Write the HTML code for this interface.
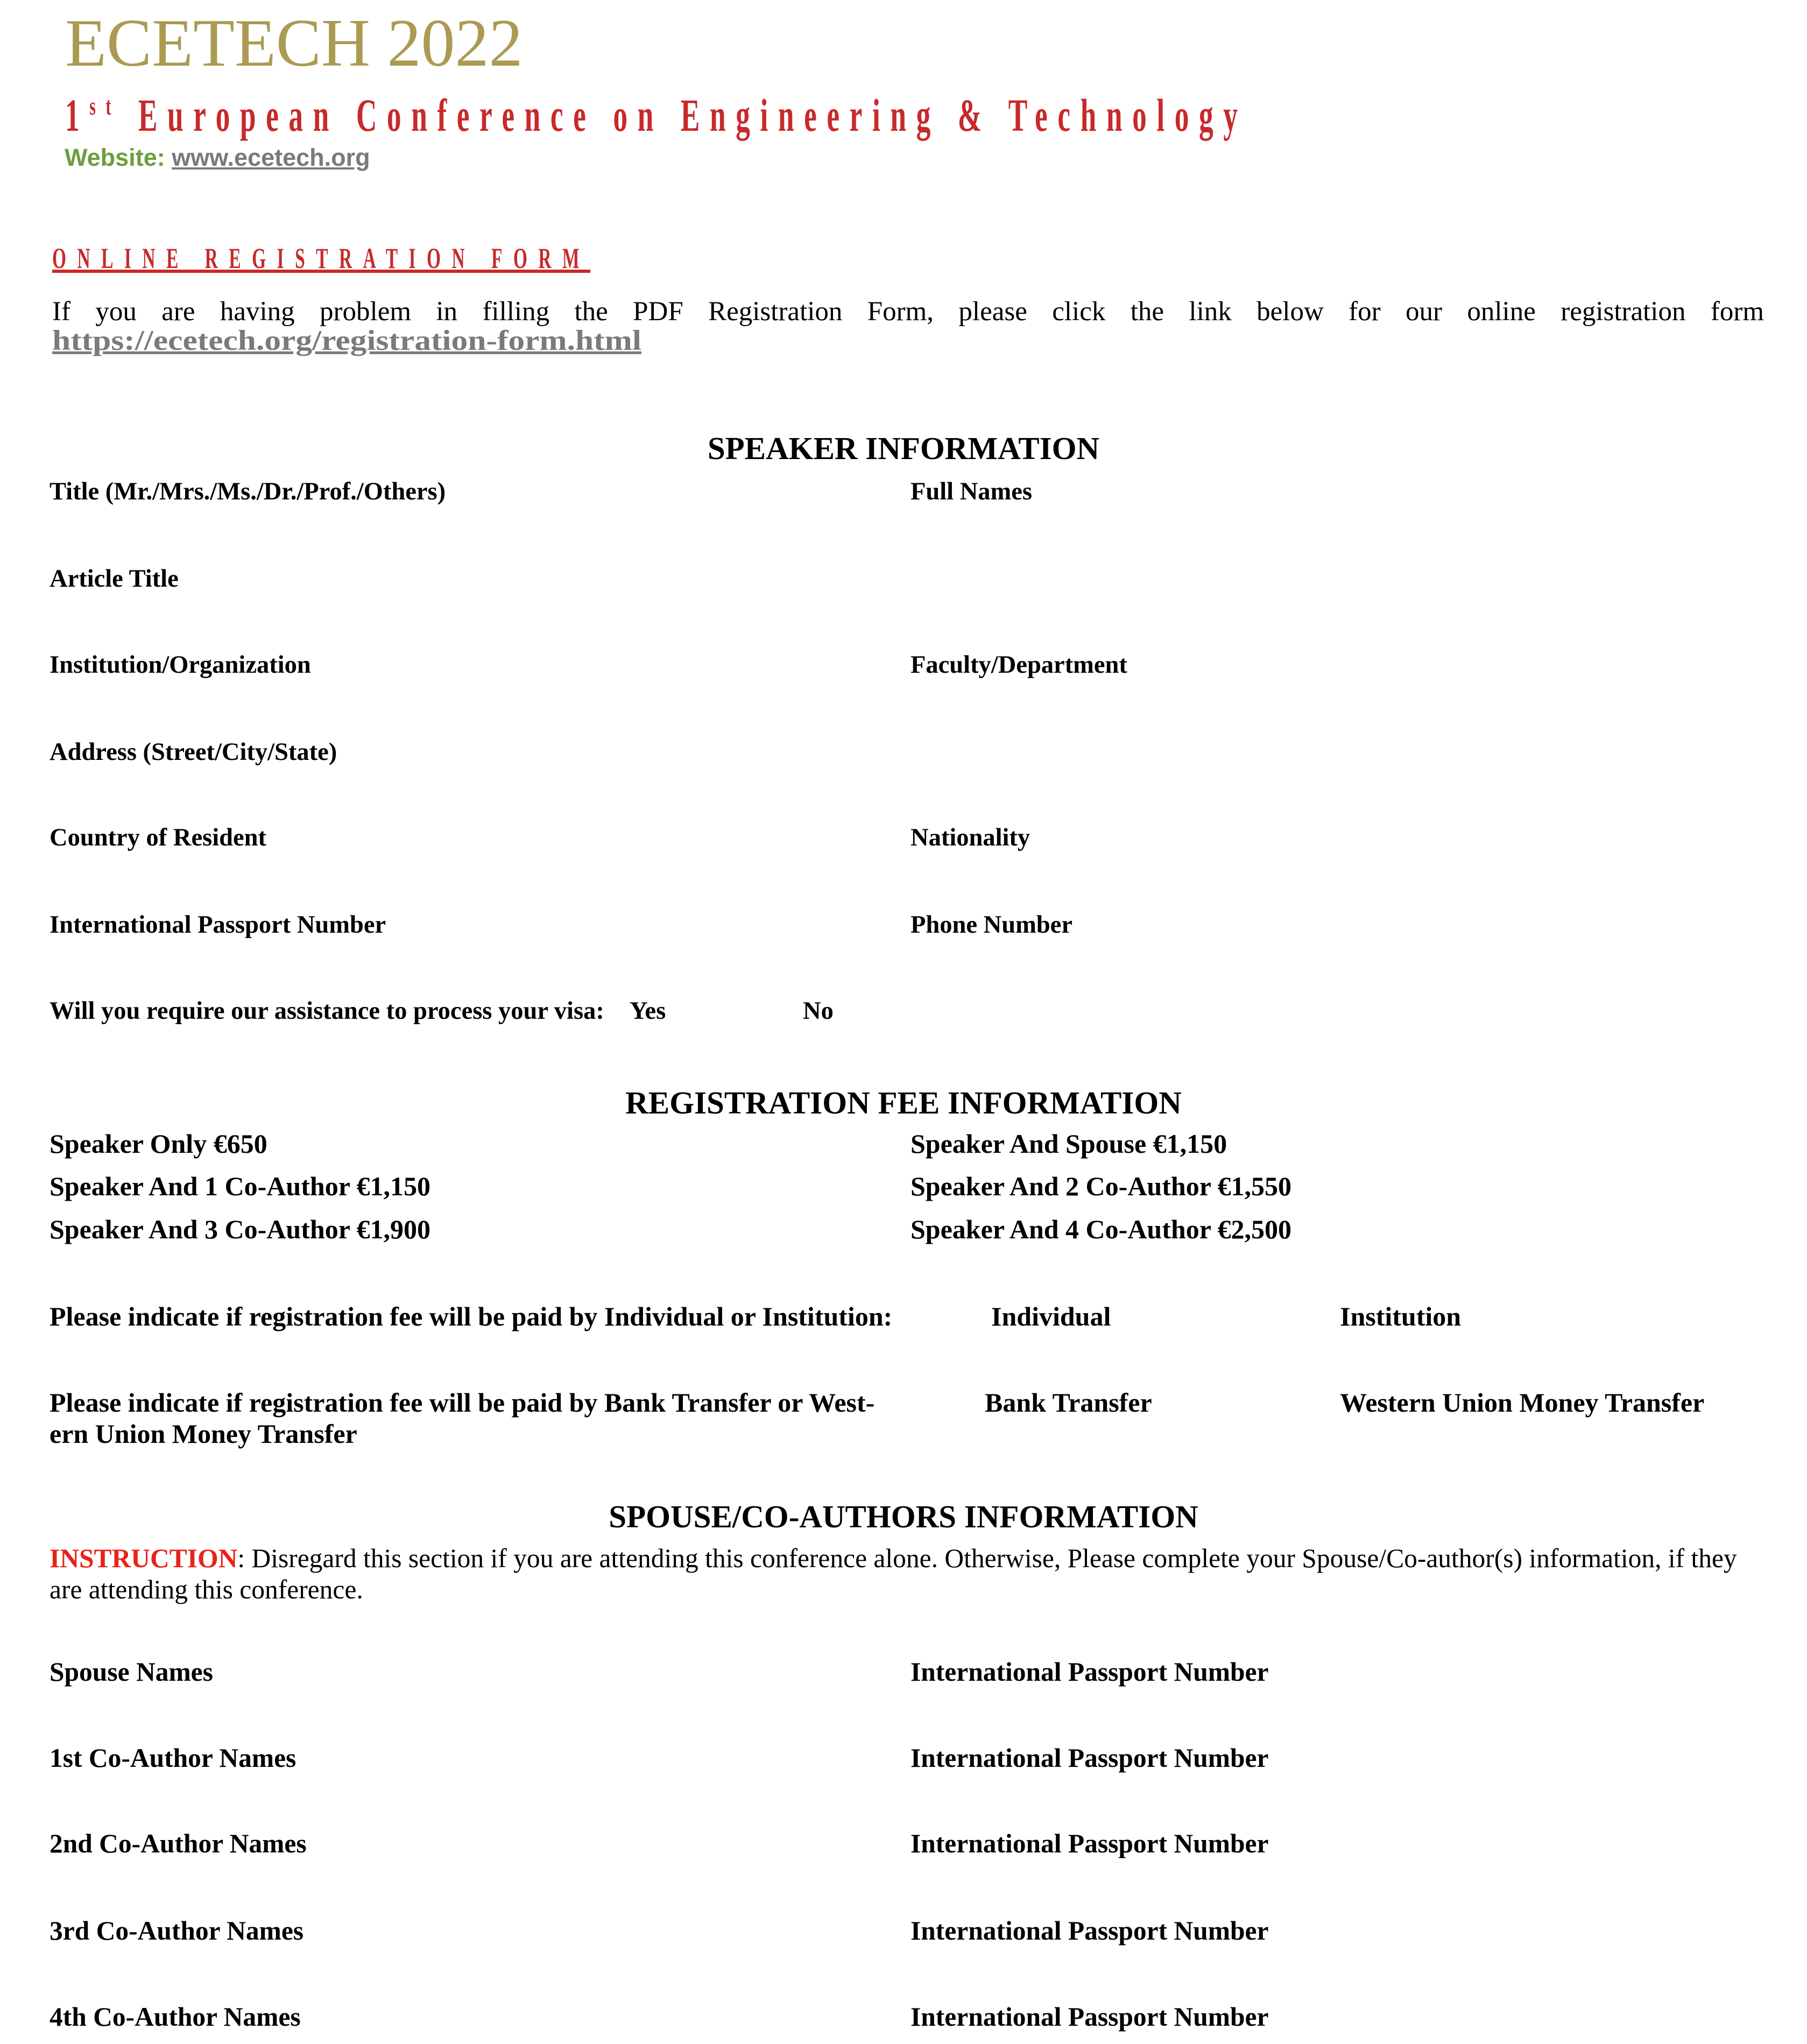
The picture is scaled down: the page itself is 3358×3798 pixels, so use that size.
<!DOCTYPE html>
<html><head><meta charset="utf-8"><style>
html,body{margin:0;padding:0;background:#fff;}
body{width:3358px;height:3798px;position:relative;overflow:hidden;font-family:"Liberation Serif",serif;color:#000;}
.a{position:absolute;line-height:1;white-space:nowrap;}
.l{font-size:46.5px;font-weight:bold;}
.s{font-size:49.5px;font-weight:bold;}
.f{font-size:50px;font-weight:bold;}
.h{font-size:59px;font-weight:bold;left:0;width:3358px;text-align:center;}
</style></head><body>
<div class="a" style="left:121px;top:18px;font-size:126px;color:#ab9a52;">ECETECH 2022</div>
<div class="a" style="left:121px;top:171px;font-size:86px;font-weight:bold;color:#c8292b;letter-spacing:30px;transform:scaleX(0.62);transform-origin:0 0;">1<span style="font-size:48px;vertical-align:30px;">st</span> European Conference on Engineering &amp; Technology</div>
<div class="a" style="left:120px;top:270px;font-size:45px;font-family:'Liberation Sans',sans-serif;font-weight:bold;color:#6a9e3f;">Website: <span style="color:#7a7a7a;text-decoration:underline;">www.ecetech.org</span></div>
<div class="a" style="left:97px;top:453px;font-size:54px;font-weight:bold;color:#c8292b;letter-spacing:33px;transform:scaleX(0.62);transform-origin:0 0;text-decoration:underline;text-decoration-thickness:6px;">ONLINE REGISTRATION FORM</div>
<div style="position:absolute;left:97px;top:551px;width:3181px;font-size:51px;line-height:56px;text-align:justify;text-align-last:justify;white-space:nowrap;">If you are having problem in filling the PDF Registration Form, please click the link below for our online registration form</div>
<div class="a" style="left:97px;top:605px;font-size:53px;line-height:56px;font-weight:bold;color:#7a7a7a;text-decoration:underline;transform:scaleX(1.16);transform-origin:0 0;">https://ecetech.org/registration-form.html</div>
<div class="a h" style="top:804px;">SPEAKER INFORMATION</div>
<div class="a l" style="left:92px;top:891px;">Title (Mr./Mrs./Ms./Dr./Prof./Others)</div>
<div class="a l" style="left:1692px;top:891px;">Full Names</div>
<div class="a l" style="left:92px;top:1053px;">Article Title</div>
<div class="a l" style="left:92px;top:1213px;">Institution/Organization</div>
<div class="a l" style="left:1692px;top:1213px;">Faculty/Department</div>
<div class="a l" style="left:92px;top:1375px;">Address (Street/City/State)</div>
<div class="a l" style="left:92px;top:1534px;">Country of Resident</div>
<div class="a l" style="left:1692px;top:1534px;">Nationality</div>
<div class="a l" style="left:92px;top:1696px;">International Passport Number</div>
<div class="a l" style="left:1692px;top:1696px;">Phone Number</div>
<div class="a l" style="left:92px;top:1856px;">Will you require our assistance to process your visa:</div>
<div class="a l" style="left:1170px;top:1856px;">Yes</div>
<div class="a l" style="left:1492px;top:1856px;">No</div>
<div class="a h" style="top:2020px;">REGISTRATION FEE INFORMATION</div>
<div class="a f" style="left:92px;top:2100px;">Speaker Only €650</div>
<div class="a f" style="left:1692px;top:2100px;">Speaker And Spouse €1,150</div>
<div class="a f" style="left:92px;top:2179px;">Speaker And 1 Co-Author €1,150</div>
<div class="a f" style="left:1692px;top:2179px;">Speaker And 2 Co-Author €1,550</div>
<div class="a f" style="left:92px;top:2259px;">Speaker And 3 Co-Author €1,900</div>
<div class="a f" style="left:1692px;top:2259px;">Speaker And 4 Co-Author €2,500</div>
<div class="a f" style="left:92px;top:2421px;">Please indicate if registration fee will be paid by Individual or Institution:</div>
<div class="a f" style="left:1842px;top:2421px;">Individual</div>
<div class="a f" style="left:2490px;top:2421px;">Institution</div>
<div class="a f" style="left:92px;top:2577px;line-height:58px;">Please indicate if registration fee will be paid by Bank Transfer or West-<br>ern Union Money Transfer</div>
<div class="a f" style="left:1830px;top:2581px;">Bank Transfer</div>
<div class="a f" style="left:2490px;top:2581px;">Western Union Money Transfer</div>
<div class="a h" style="top:2789px;">SPOUSE/CO-AUTHORS INFORMATION</div>
<div style="position:absolute;left:92px;top:2867px;width:3190px;font-size:49.5px;line-height:58px;"><span style="color:#e8231a;font-weight:bold;">INSTRUCTION</span>: Disregard this section if you are attending this conference alone. Otherwise, Please complete your Spouse/Co-author(s) information, if they are attending this conference.</div>
<div class="a s" style="left:92px;top:3082px;">Spouse Names</div>
<div class="a s" style="left:1692px;top:3082px;">International Passport Number</div>
<div class="a s" style="left:92px;top:3242px;">1st Co-Author Names</div>
<div class="a s" style="left:1692px;top:3242px;">International Passport Number</div>
<div class="a s" style="left:92px;top:3401px;">2nd Co-Author Names</div>
<div class="a s" style="left:1692px;top:3401px;">International Passport Number</div>
<div class="a s" style="left:92px;top:3563px;">3rd Co-Author Names</div>
<div class="a s" style="left:1692px;top:3563px;">International Passport Number</div>
<div class="a s" style="left:92px;top:3723px;">4th Co-Author Names</div>
<div class="a s" style="left:1692px;top:3723px;">International Passport Number</div>
</body></html>
